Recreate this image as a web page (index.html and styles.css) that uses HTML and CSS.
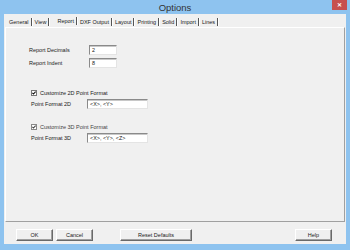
FILE: index.html
```html
<!DOCTYPE html>
<html>
<head>
<meta charset="utf-8">
<link rel="stylesheet" href="styles.css">
</head>
<body>
<div class="window">
  <div class="titlebar">
    <span class="title">Options</span>
    <span class="close">&#x2715;</span>
  </div>
  <div class="client">
    <div class="tabs">
      <span class="tab">General</span>
      <span class="tab">View</span>
      <span class="tab active">Report</span>
      <span class="tab">DXF Output</span>
      <span class="tab">Layout</span>
      <span class="tab">Printing</span>
      <span class="tab">Solid</span>
      <span class="tab">Import</span>
      <span class="tab">Lines</span>
    </div>
    <div class="panel">
      <div class="grid1">
        <span class="lbl">Report Decimals</span>
        <span class="field short">2</span>
        <span class="lbl">Report Indent</span>
        <span class="field short sel">8</span>
      </div>
      <div class="check first"><svg class="box" viewBox="0 0 6 6" width="6" height="6"><rect x="0.5" y="0.5" width="5" height="5" fill="#fff" stroke="#777" stroke-width="1"/><path d="M1.4 2.8 L2.5 4 L4.6 1.6" fill="none" stroke="#111" stroke-width="1.1"/></svg>Customize 2D Point Format</div>
      <div class="grid2">
        <span class="lbl">Point Format 2D</span>
        <span class="field long">&lt;X&gt;, &lt;Y&gt;</span>
      </div>
      <div class="check second dim"><svg class="box" viewBox="0 0 6 6" width="6" height="6"><rect x="0.5" y="0.5" width="5" height="5" fill="#fff" stroke="#888" stroke-width="1"/><path d="M1.4 2.8 L2.5 4 L4.6 1.6" fill="none" stroke="#444" stroke-width="1.1"/></svg>Customize 3D Point Format</div>
      <div class="grid2">
        <span class="lbl">Point Format 3D</span>
        <span class="field long">&lt;X&gt;, &lt;Y&gt;, &lt;Z&gt;</span>
      </div>
    </div>
    <div class="buttons">
      <span class="btn">OK</span>
      <span class="btn">Cancel</span>
      <span class="btn wide">Reset Defaults</span>
      <span class="spacer"></span>
      <span class="btn">Help</span>
    </div>
  </div>
</div>
</body>
</html>
```

FILE: styles.css
```css
html, body {
  margin: 0;
  padding: 0;
}
body {
  font-family: "Liberation Sans", Arial, sans-serif;
  font-size: 5.5px;
  color: #1a1a1a;
  background: #8ec3ef;
}
.window {
  width: 350px;
  height: 250px;
  box-sizing: border-box;
  background: #8ec3ef;
  display: flex;
  flex-direction: column;
  padding: 0 4px 6px 4px;
}
.titlebar {
  height: 14px;
  flex: none;
  position: relative;
  display: flex;
  align-items: center;
  justify-content: center;
}
.title {
  font-size: 9.5px;
  color: #333;
  margin-top: 1px;
}
.close {
  position: absolute;
  right: -1px;
  top: 0;
  width: 15px;
  height: 10px;
  background: #c75050;
  color: #fff;
  font-size: 5.5px;
  font-weight: bold;
  display: flex;
  align-items: center;
  justify-content: center;
}
.client {
  flex: 1;
  background: #f0f0f0;
  display: flex;
  flex-direction: column;
  padding: 0 1px 0 1px;
}
.tabs {
  display: flex;
  height: 11px;
  padding: 2px 0 0 3px;
  align-items: center;
}
.tab {
  padding: 0 2px 0 1px;
  border-right: 1px solid #555;
  box-shadow: 1px 0 0 #fff;
  margin-right: 2px;
  line-height: 8px;
}
.tab.active {
  padding: 0 2px 0 6px;
  margin-top: -1px;
}
.panel {
  height: 195px;
  box-sizing: border-box;
  border-top: 1px solid #fff;
  border-left: 1px solid #fff;
  border-right: 1px solid #a0a0a0;
  border-bottom: 1px solid #a0a0a0;
  padding: 17px 0 0 23px;
  display: flex;
  flex-direction: column;
}
.grid1 {
  display: grid;
  grid-template-columns: 60px 28px;
  row-gap: 3px;
  align-items: center;
}
.grid2 {
  display: grid;
  grid-template-columns: 56px 61px;
  align-items: center;
  margin-left: 2px;
  margin-top: 3px;
}
.field {
  height: 10px;
  box-sizing: border-box;
  background: #fff;
  border-top: 1px solid #8a8a8a;
  border-left: 1px solid #8a8a8a;
  border-right: 1px solid #e4e4e4;
  border-bottom: 1px solid #e4e4e4;
  box-shadow: inset 0 1px 0 #c8c8c8;
  padding-left: 2px;
  line-height: 8px;
  font-size: 5.4px;
}
.check {
  display: flex;
  align-items: center;
  margin-left: 2px;
  height: 7px;
}
.check.first {
  margin-top: 21px;
}
.check.second {
  margin-top: 14px;
}
.check.dim {
  color: #444;
}
.box {
  display: block;
  flex: none;
  margin-right: 3px;
}
.buttons {
  display: flex;
  padding: 7px 13px 0 11px;
  gap: 3px;
}
.btn {
  width: 37px;
  height: 12px;
  box-sizing: border-box;
  border-top: 1px solid #fff;
  border-left: 1px solid #fff;
  border-right: 1px solid #696969;
  border-bottom: 1px solid #696969;
  box-shadow: inset -1px -1px 0 #a0a0a0;
  display: flex;
  align-items: center;
  justify-content: center;
}
.btn.wide {
  width: 72px;
  margin-left: 24px;
}
.spacer {
  flex: 1;
}
```
